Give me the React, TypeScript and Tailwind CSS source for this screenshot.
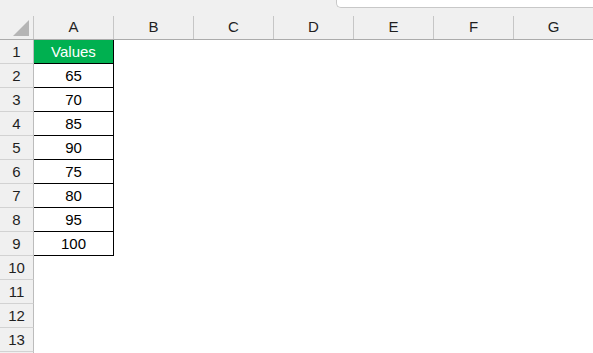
const columns = ["A", "B", "C", "D", "E", "F", "G"];
const values = [65, 70, 85, 90, 75, 80, 95, 100];
const rowCount = 14;

function ColumnHeader({ label }: { label: string }) {
  return (
    <div className="w-20 shrink-0 h-full flex items-center justify-center border-r border-[#c6c6c6] text-[15px] text-[#1f1f1f]">
      {label}
    </div>
  );
}

function Row({ index }: { index: number }) {
  const isHeader = index === 1;
  const value = index >= 2 && index <= 9 ? values[index - 2] : null;
  const inTable = index >= 1 && index <= 9;
  // last row only peeks in at the bottom edge, no label shown
  const label = index < rowCount ? index : "";

  return (
    <div className="flex h-6 shrink-0">
      <div className="w-[34px] shrink-0 flex items-center justify-center pt-px bg-[#f0f0f0] border-r border-b border-r-[#bcbcbc] border-b-[#d2d2d2] text-[15px] text-[#1f1f1f]">
        {label}
      </div>
      {inTable ? (
        <div
          className={`w-20 shrink-0 flex items-center justify-center pt-px border-r border-b border-black text-[15px] ${
            isHeader ? "bg-[#00b050] text-white" : "bg-white text-black"
          }`}
        >
          {isHeader ? "Values" : value}
        </div>
      ) : (
        <div className="w-20 shrink-0" />
      )}
      <div className="flex-1" />
    </div>
  );
}

export default function App() {
  return (
    <div
      className="w-[593px] h-[353px] overflow-hidden bg-white flex flex-col"
      style={{ fontFamily: '"Liberation Sans", Arial, sans-serif' }}
    >
      <div className="h-4 shrink-0 bg-[#f0f0f0] flex justify-end">
        <div className="w-[257px] h-2 bg-white border-l border-b border-[#c8c8c8] rounded-bl-[5px]" />
      </div>
      <div className="h-6 shrink-0 flex bg-[#f0f0f0] border-b border-[#ababab]">
        <div className="w-[34px] shrink-0 h-full border-r border-[#c6c6c6] flex items-end justify-end pr-[3px] pb-[2px]">
          <svg width="17" height="17" viewBox="0 0 17 17">
            <polygon points="16,0 16,16 0,16" fill="#b5b5b5" />
          </svg>
        </div>
        {columns.map((c) => (
          <ColumnHeader key={c} label={c} />
        ))}
      </div>
      {Array.from({ length: rowCount }, (_, i) => (
        <Row key={i + 1} index={i + 1} />
      ))}
    </div>
  );
}
